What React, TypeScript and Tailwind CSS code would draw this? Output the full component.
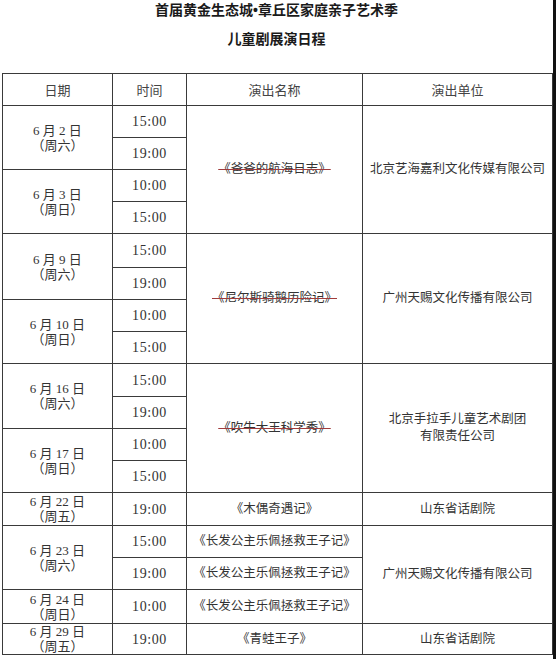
import React from 'react'

type Row = {
  h: string
  date?: { md: string; wd: string; span: number; top?: string }
  time: string
  show?: { name: string; span: number; struck?: boolean }
  org?: { lines: string[]; span: number }
}

const rows: Row[] = [
  { h: 'h-[32px]', date: { md: '6 月 2 日', wd: '（周六）', span: 2 }, time: '15:00', show: { name: '《爸爸的航海日志》', span: 4, struck: true }, org: { lines: ['北京艺海嘉利文化传媒有限公司'], span: 4 } },
  { h: 'h-[32px]', time: '19:00' },
  { h: 'h-[32px]', date: { md: '6 月 3 日', wd: '（周日）', span: 2, top: 'border-t-[#8a8a8a]' }, time: '10:00' },
  { h: 'h-[32px]', time: '15:00' },
  { h: 'h-[34px]', date: { md: '6 月 9 日', wd: '（周六）', span: 2 }, time: '15:00', show: { name: '《尼尔斯骑鹅历险记》', span: 4, struck: true }, org: { lines: ['广州天赐文化传播有限公司'], span: 4 } },
  { h: 'h-[32px]', time: '19:00' },
  { h: 'h-[32px]', date: { md: '6 月 10 日', wd: '（周日）', span: 2, top: 'border-t-[#8a8a8a]' }, time: '10:00' },
  { h: 'h-[32px]', time: '15:00' },
  { h: 'h-[33px]', date: { md: '6 月 16 日', wd: '（周六）', span: 2 }, time: '15:00', show: { name: '《吹牛大王科学秀》', span: 4, struck: true }, org: { lines: ['北京手拉手儿童艺术剧团', '有限责任公司'], span: 4 } },
  { h: 'h-[32px]', time: '19:00' },
  { h: 'h-[32px]', date: { md: '6 月 17 日', wd: '（周日）', span: 2, top: 'border-t-[#8a8a8a]' }, time: '10:00' },
  { h: 'h-[32px]', time: '15:00' },
  { h: 'h-[33px]', date: { md: '6 月 22 日', wd: '（周五）', span: 1 }, time: '19:00', show: { name: '《木偶奇遇记》', span: 1 }, org: { lines: ['山东省话剧院'], span: 1 } },
  { h: 'h-[32px]', date: { md: '6 月 23 日', wd: '（周六）', span: 2, top: 'border-t-[#8a8a8a]' }, time: '15:00', show: { name: '《长发公主乐佩拯救王子记》', span: 1 }, org: { lines: ['广州天赐文化传播有限公司'], span: 3 } },
  { h: 'h-[32px]', time: '19:00', show: { name: '《长发公主乐佩拯救王子记》', span: 1 } },
  { h: 'h-[34px]', date: { md: '6 月 24 日', wd: '（周日）', span: 1 }, time: '10:00', show: { name: '《长发公主乐佩拯救王子记》', span: 1 } },
  { h: 'h-[30px]', date: { md: '6 月 29 日', wd: '（周五）', span: 1, top: 'border-t-[#8a8a8a]' }, time: '19:00', show: { name: '《青蛙王子》', span: 1 }, org: { lines: ['山东省话剧院'], span: 1 } },
]

const cell = 'border border-[#3a3a3a] p-0 text-center align-middle'

export default function App() {
  return (
    <div
      className="relative w-[556px] h-[659px] bg-white text-[#2b2b2b] overflow-hidden border-r-[3px] border-[#111]"
      style={{ fontFamily: '"Liberation Serif", "Noto Sans CJK SC", serif' }}
    >
      {/* titles */}
      <div className="text-center" style={{ fontFamily: '"Noto Sans CJK SC", sans-serif' }}>
        <h1 className="text-[14px] leading-[18px] font-bold text-[#1a1a1a]">
          首届黄金生态城<span style={{ fontFamily: '"Liberation Sans", sans-serif' }}>•</span>章丘区家庭亲子艺术季
        </h1>
        <h2 className="mt-[10px] text-[14px] leading-[18px] font-bold text-[#1a1a1a]">
          儿童剧展演日程
        </h2>
      </div>

      <table className="mt-[26px] ml-[2px] w-[551px] table-fixed border-collapse">
        <colgroup>
          <col className="w-[110px]" />
          <col className="w-[74px]" />
          <col className="w-[176px]" />
          <col className="w-[190px]" />
        </colgroup>
        <thead>
          <tr className="h-[32px] text-[13px] text-[#444]" style={{ fontFamily: '"Noto Sans CJK SC", sans-serif' }}>
            <th className={`${cell} font-normal`}>日期</th>
            <th className={`${cell} font-normal`}>时间</th>
            <th className={`${cell} font-normal`}>演出名称</th>
            <th className={`${cell} font-normal`}>演出单位</th>
          </tr>
        </thead>
        <tbody>
          {rows.map((r, i) => (
            <tr key={i} className={r.h}>
              {r.date && (
                <td rowSpan={r.date.span} className={`${cell} ${r.date.top ?? ''} text-[13px] leading-[15px] text-[#333]`}>
                  <div>{r.date.md}</div>
                  <div>{r.date.wd}</div>
                </td>
              )}
              <td className={`${cell} text-[14px] tracking-[0.6px] text-[#333]`}>{r.time}</td>
              {r.show && (
                <td rowSpan={r.show.span} className={`${cell} text-[12.5px] text-[#333]`}>
                  <span
                    className={r.show.struck ? 'line-through decoration-[#a03c3c] decoration-1' : ''}
                  >
                    {r.show.name}
                  </span>
                </td>
              )}
              {r.org && (
                <td rowSpan={r.org.span} className={`${cell} text-[12.5px] leading-[17px] text-[#333]`}>
                  {r.org.lines.map((l) => (
                    <div key={l}>{l}</div>
                  ))}
                </td>
              )}
            </tr>
          ))}
        </tbody>
      </table>
    </div>
  )
}
